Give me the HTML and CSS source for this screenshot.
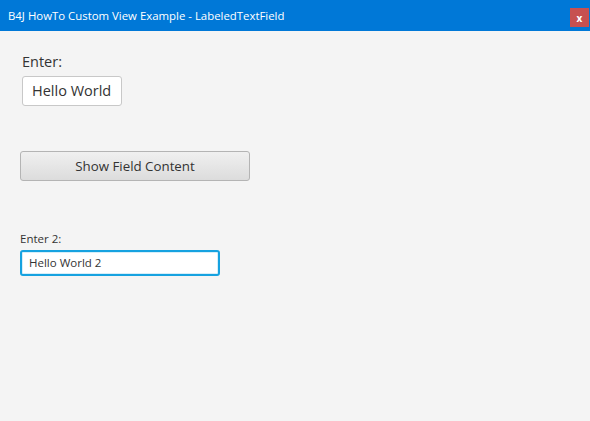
FILE: index.html
```html
<!DOCTYPE html>
<html>
<head>
<meta charset="utf-8">
<link rel="stylesheet" href="styles.css">
</head>
<body>
<div class="window">
  <div class="titlebar">
    <span class="title">B4J HowTo Custom View Example - LabeledTextField</span>
    <span class="close">x</span>
  </div>
  <div class="content">
    <div class="group1">
      <div class="label-big">Enter:</div>
      <div class="field-big">Hello World</div>
    </div>
    <div class="button">Show Field Content</div>
    <div class="group2">
      <div class="label-small">Enter 2:</div>
      <div class="field-small">Hello World 2</div>
    </div>
  </div>
</div>
</body>
</html>
```
FILE: styles.css
```css
html, body {
  margin: 0;
  padding: 0;
}
body {
  width: 590px;
  height: 421px;
  background: #f4f4f4;
  font-family: "Open Sans", "Noto Sans", sans-serif;
  color: #333;
  overflow: hidden;
}
.titlebar {
  height: 31px;
  background: #0078d7;
  display: flex;
  align-items: center;
  justify-content: space-between;
  box-sizing: border-box;
  padding: 0 1px 0 8px;
}
.title {
  color: #fff;
  font-size: 11.4px;
  margin-top: -1px;
}
.close {
  width: 19px;
  height: 19px;
  background: #c75050;
  color: #fff;
  font-size: 10px;
  font-weight: bold;
  display: flex;
  align-items: center;
  justify-content: center;
  line-height: 1;
  margin-top: 4px;
}
.content {
  padding: 0 0 0 20px;
}
.group1 {
  padding: 21px 0 0 2px;
}
.label-big {
  font-size: 14.5px;
  line-height: 20px;
  color: #333;
  margin-bottom: 4px;
}
.field-big {
  width: 100px;
  height: 30px;
  box-sizing: border-box;
  border: 1px solid #c8c8c8;
  border-radius: 3px;
  background: #fff;
  font-size: 14.5px;
  line-height: 28px;
  padding-left: 9px;
  color: #333;
}
.button {
  margin-top: 45px;
  width: 230px;
  height: 30px;
  box-sizing: border-box;
  border: 1px solid #b4b4b4;
  border-radius: 3px;
  background: linear-gradient(#f0f0f0, #dcdcdc);
  font-size: 13.3px;
  line-height: 28px;
  text-align: center;
  color: #333;
}
.group2 {
  padding-top: 50px;
}
.label-small {
  font-size: 11.5px;
  line-height: 16px;
  color: #333;
  margin-bottom: 3px;
}
.field-small {
  width: 200px;
  height: 26px;
  box-sizing: border-box;
  border: 2px solid #16a2e0;
  border-radius: 3px;
  background: #fff;
  box-shadow: inset 0 0 0 1px #d6eef9;
  font-size: 11.5px;
  line-height: 22px;
  padding-left: 7px;
  color: #333;
}
```
